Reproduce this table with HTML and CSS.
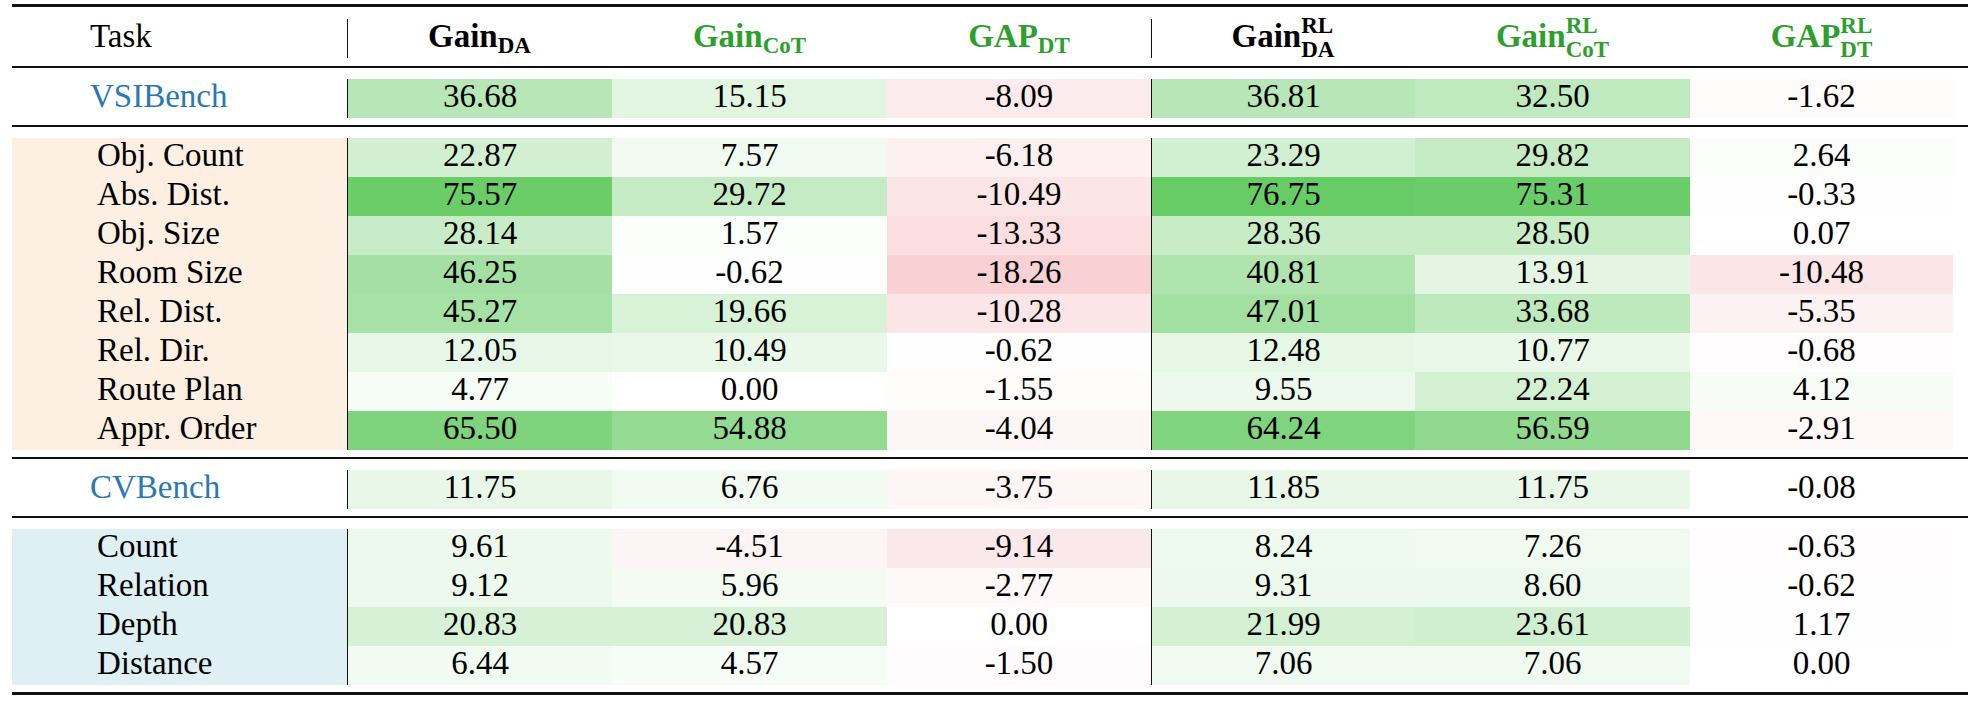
FILE: index.html
```html
<!DOCTYPE html>
<html>
<head>
<meta charset="utf-8">
<link rel="stylesheet" href="styles.css">
</head>
<body>
<div class="tbl">
  <div class="rule thick"></div>
  <div class="row head">
    <div class="c task">Task</div>
    <div class="c hb bar">Gain<span class="sb">DA</span></div>
    <div class="c hb g">Gain<span class="sb">CoT</span></div>
    <div class="c hb g">GAP<span class="sb">DT</span></div>
    <div class="c hb bar">Gain<span class="ss"><span>RL</span><span>DA</span></span></div>
    <div class="c hb g">Gain<span class="ss"><span>RL</span><span>CoT</span></span></div>
    <div class="c hb g">GAP<span class="ss"><span>RL</span><span>DT</span></span></div>
    <div class="c"></div>
  </div>
  <div class="rule"></div>

  <div class="section">
    <div class="row">
      <div class="c task bench">VSIBench</div>
      <div class="c v p vb" style="--t:.478">36.68</div>
      <div class="c v p" style="--t:.197">15.15</div>
      <div class="c v n" style="--t:.162">-8.09</div>
      <div class="c v p vb" style="--t:.480">36.81</div>
      <div class="c v p" style="--t:.423">32.50</div>
      <div class="c v n" style="--t:.032">-1.62</div>
      <div class="c"></div>
    </div>
  </div>
  <div class="rule"></div>

  <div class="section orange">
    <div class="row">
      <div class="c task sub">Obj. Count</div>
      <div class="c v p vb" style="--t:.298">22.87</div>
      <div class="c v p" style="--t:.099">7.57</div>
      <div class="c v n" style="--t:.124">-6.18</div>
      <div class="c v p vb" style="--t:.303">23.29</div>
      <div class="c v p" style="--t:.389">29.82</div>
      <div class="c v p" style="--t:.034">2.64</div>
      <div class="c"></div>
    </div>
    <div class="row">
      <div class="c task sub">Abs. Dist.</div>
      <div class="c v p vb" style="--t:.985">75.57</div>
      <div class="c v p" style="--t:.387">29.72</div>
      <div class="c v n" style="--t:.210">-10.49</div>
      <div class="c v p vb" style="--t:1">76.75</div>
      <div class="c v p" style="--t:.981">75.31</div>
      <div class="c v n" style="--t:.007">-0.33</div>
      <div class="c"></div>
    </div>
    <div class="row">
      <div class="c task sub">Obj. Size</div>
      <div class="c v p vb" style="--t:.367">28.14</div>
      <div class="c v p" style="--t:.020">1.57</div>
      <div class="c v n" style="--t:.267">-13.33</div>
      <div class="c v p vb" style="--t:.370">28.36</div>
      <div class="c v p" style="--t:.371">28.50</div>
      <div class="c v p" style="--t:.001">0.07</div>
      <div class="c"></div>
    </div>
    <div class="row">
      <div class="c task sub">Room Size</div>
      <div class="c v p vb" style="--t:.603">46.25</div>
      <div class="c v n" style="--t:.012">-0.62</div>
      <div class="c v n" style="--t:.365">-18.26</div>
      <div class="c v p vb" style="--t:.532">40.81</div>
      <div class="c v p" style="--t:.181">13.91</div>
      <div class="c v n" style="--t:.210">-10.48</div>
      <div class="c"></div>
    </div>
    <div class="row">
      <div class="c task sub">Rel. Dist.</div>
      <div class="c v p vb" style="--t:.590">45.27</div>
      <div class="c v p" style="--t:.256">19.66</div>
      <div class="c v n" style="--t:.206">-10.28</div>
      <div class="c v p vb" style="--t:.613">47.01</div>
      <div class="c v p" style="--t:.439">33.68</div>
      <div class="c v n" style="--t:.107">-5.35</div>
      <div class="c"></div>
    </div>
    <div class="row">
      <div class="c task sub">Rel. Dir.</div>
      <div class="c v p vb" style="--t:.157">12.05</div>
      <div class="c v p" style="--t:.137">10.49</div>
      <div class="c v n" style="--t:.012">-0.62</div>
      <div class="c v p vb" style="--t:.163">12.48</div>
      <div class="c v p" style="--t:.140">10.77</div>
      <div class="c v n" style="--t:.014">-0.68</div>
      <div class="c"></div>
    </div>
    <div class="row">
      <div class="c task sub">Route Plan</div>
      <div class="c v p vb" style="--t:.062">4.77</div>
      <div class="c v p" style="--t:0">0.00</div>
      <div class="c v n" style="--t:.031">-1.55</div>
      <div class="c v p vb" style="--t:.124">9.55</div>
      <div class="c v p" style="--t:.290">22.24</div>
      <div class="c v p" style="--t:.054">4.12</div>
      <div class="c"></div>
    </div>
    <div class="row">
      <div class="c task sub">Appr. Order</div>
      <div class="c v p vb" style="--t:.853">65.50</div>
      <div class="c v p" style="--t:.715">54.88</div>
      <div class="c v n" style="--t:.081">-4.04</div>
      <div class="c v p vb" style="--t:.837">64.24</div>
      <div class="c v p" style="--t:.737">56.59</div>
      <div class="c v n" style="--t:.058">-2.91</div>
      <div class="c"></div>
    </div>
  </div>
  <div class="rule"></div>

  <div class="section">
    <div class="row">
      <div class="c task bench">CVBench</div>
      <div class="c v p vb" style="--t:.153">11.75</div>
      <div class="c v p" style="--t:.088">6.76</div>
      <div class="c v n" style="--t:.075">-3.75</div>
      <div class="c v p vb" style="--t:.154">11.85</div>
      <div class="c v p" style="--t:.153">11.75</div>
      <div class="c v n" style="--t:.002">-0.08</div>
      <div class="c"></div>
    </div>
  </div>
  <div class="rule"></div>

  <div class="section blue">
    <div class="row">
      <div class="c task sub">Count</div>
      <div class="c v p vb" style="--t:.125">9.61</div>
      <div class="c v n" style="--t:.090">-4.51</div>
      <div class="c v n" style="--t:.183">-9.14</div>
      <div class="c v p vb" style="--t:.107">8.24</div>
      <div class="c v p" style="--t:.095">7.26</div>
      <div class="c v n" style="--t:.013">-0.63</div>
      <div class="c"></div>
    </div>
    <div class="row">
      <div class="c task sub">Relation</div>
      <div class="c v p vb" style="--t:.119">9.12</div>
      <div class="c v p" style="--t:.078">5.96</div>
      <div class="c v n" style="--t:.055">-2.77</div>
      <div class="c v p vb" style="--t:.121">9.31</div>
      <div class="c v p" style="--t:.112">8.60</div>
      <div class="c v n" style="--t:.012">-0.62</div>
      <div class="c"></div>
    </div>
    <div class="row">
      <div class="c task sub">Depth</div>
      <div class="c v p vb" style="--t:.271">20.83</div>
      <div class="c v p" style="--t:.271">20.83</div>
      <div class="c v p" style="--t:0">0.00</div>
      <div class="c v p vb" style="--t:.287">21.99</div>
      <div class="c v p" style="--t:.308">23.61</div>
      <div class="c v p" style="--t:.015">1.17</div>
      <div class="c"></div>
    </div>
    <div class="row">
      <div class="c task sub">Distance</div>
      <div class="c v p vb" style="--t:.084">6.44</div>
      <div class="c v p" style="--t:.060">4.57</div>
      <div class="c v n" style="--t:.030">-1.50</div>
      <div class="c v p vb" style="--t:.092">7.06</div>
      <div class="c v p" style="--t:.092">7.06</div>
      <div class="c v p" style="--t:0">0.00</div>
      <div class="c"></div>
    </div>
  </div>
  <div class="rule thick"></div>
</div>
</body>
</html>
```

FILE: styles.css
```css
html, body {
  margin: 0;
  padding: 0;
  background: #ffffff;
}

body {
  font-family: "Liberation Serif", "Times New Roman", serif;
  font-size: 33px;
  color: #000;
}

.tbl {
  width: 1956px;
  margin-left: 12px;
  padding-top: 4px;
}

.rule {
  height: 2px;
  background: #111;
}

.rule.thick {
  height: 3px;
}

.row {
  display: grid;
  grid-template-columns: 335px 265px 275px 264px 264px 275px 263px 1fr;
}

.section {
  padding: 11px 0 7px;
}

.c {
  line-height: 34px;
  height: 34px;
  padding-bottom: 5px;
  white-space: nowrap;
}

.v {
  text-align: center;
}

.vb {
  border-left: 1px solid #111;
}

.task {
  padding-left: 78px;
}

.task.sub {
  padding-left: 85px;
}

.bench {
  color: #2a78b4;
}

.orange .task {
  background: #fdf0e3;
}

.blue .task {
  background: #dff0f5;
}

.p {
  background: rgb(calc(255 - 151 * var(--t)) calc(255 - 51 * var(--t)) calc(255 - 153 * var(--t)));
}

.n {
  background: rgb(calc(255 - 20 * var(--t)) calc(255 - 125 * var(--t)) calc(255 - 115 * var(--t)));
}

/* header */
.head .c {
  height: 59px;
  line-height: 59px;
  padding-bottom: 0;
}

.hb {
  font-weight: bold;
  text-align: center;
}

.bar {
  background: linear-gradient(#111, #111) no-repeat left 0 top 12px / 1px 39px;
}

.g {
  color: #2ca02c;
}

.sb {
  font-size: 23px;
  vertical-align: -6px;
}

.ss {
  display: inline-flex;
  flex-direction: column;
  align-items: flex-start;
  font-size: 23px;
  line-height: 24px;
  vertical-align: 14px;
}
```
